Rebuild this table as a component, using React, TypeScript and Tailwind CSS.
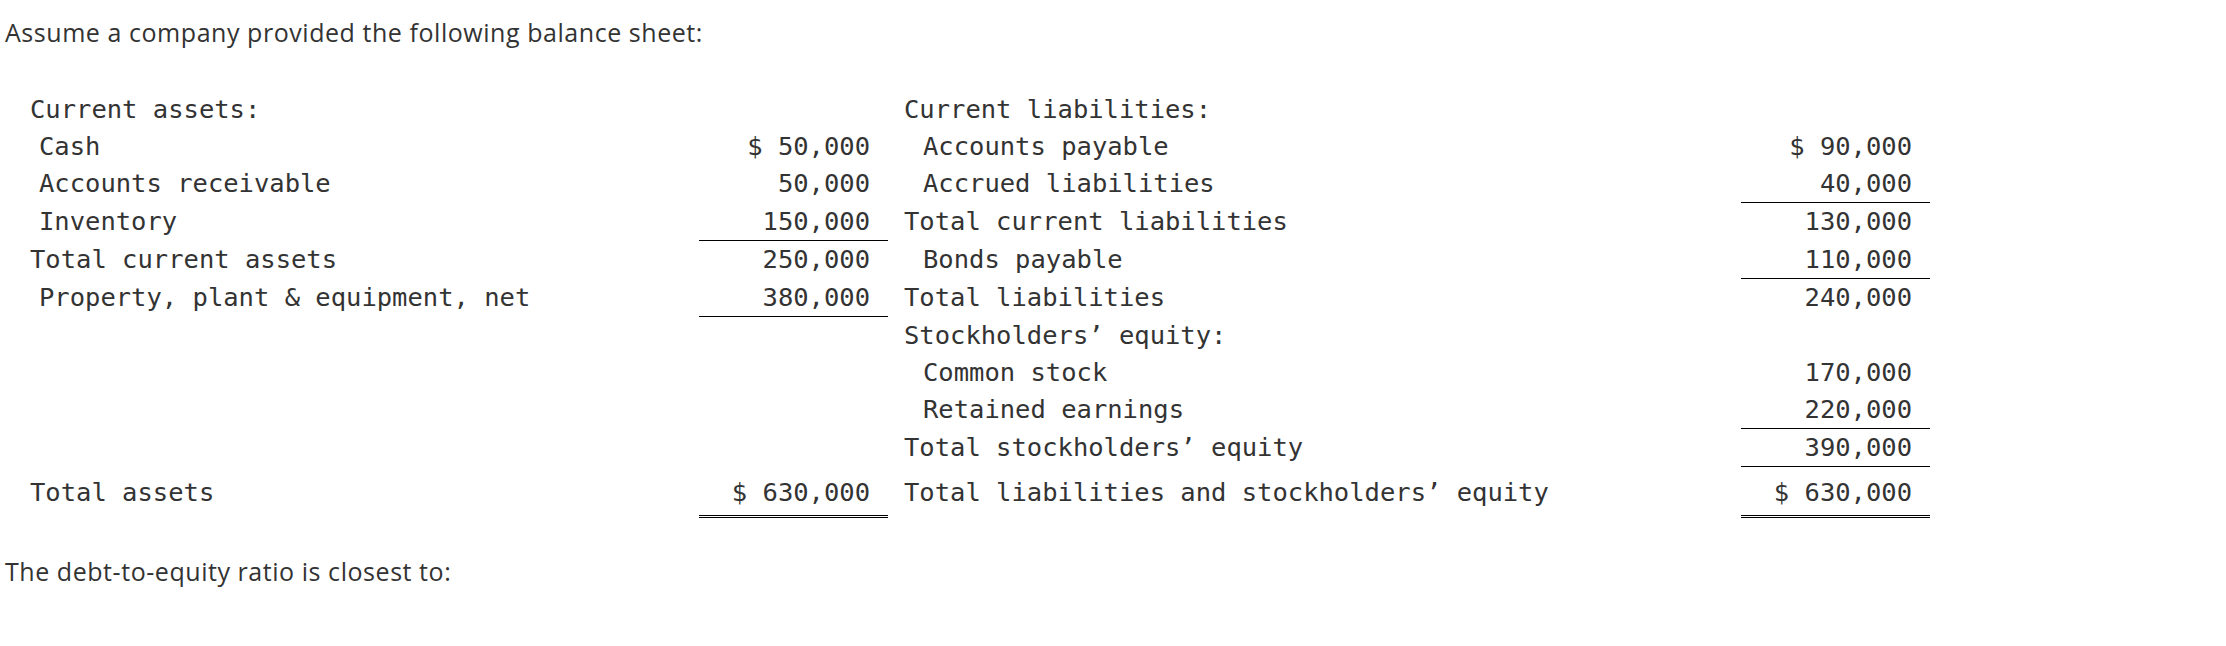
import React from "react";

type Row = {
  l1?: string;
  l1i?: boolean;
  a1?: string;
  a1b?: boolean;
  l2?: string;
  l2i?: boolean;
  a2?: string;
  a2b?: boolean;
};

const rows: Row[] = [
  { l1: "Current assets:", l2: "Current liabilities:" },
  { l1: "Cash", l1i: true, a1: "$ 50,000", l2: "Accounts payable", l2i: true, a2: "$ 90,000" },
  { l1: "Accounts receivable", l1i: true, a1: "50,000", l2: "Accrued liabilities", l2i: true, a2: "40,000", a2b: true },
  { l1: "Inventory", l1i: true, a1: "150,000", a1b: true, l2: "Total current liabilities", a2: "130,000" },
  { l1: "Total current assets", a1: "250,000", l2: "Bonds payable", l2i: true, a2: "110,000", a2b: true },
  { l1: "Property, plant & equipment, net", l1i: true, a1: "380,000", a1b: true, l2: "Total liabilities", a2: "240,000" },
  { l2: "Stockholders’ equity:" },
  { l2: "Common stock", l2i: true, a2: "170,000" },
  { l2: "Retained earnings", l2i: true, a2: "220,000", a2b: true },
  { l2: "Total stockholders’ equity", a2: "390,000", a2b: true },
];

function Label({ text, indent, side }: { text?: string; indent?: boolean; side: "left" | "right" }) {
  let cls = "whitespace-pre leading-[37px] ";
  if (side === "left") cls += indent ? "pl-[34px]" : "pl-[25px]";
  else cls += indent ? "pl-[35px]" : "pl-[16px]";
  return <div className={cls}>{text ?? ""}</div>;
}

function Amount({ text, border }: { text?: string; border?: boolean }) {
  return (
    <div
      className={
        border
          ? "whitespace-pre leading-[37px] text-right pr-[18px] border-b border-black"
          : "whitespace-pre leading-[37px] text-right pr-[18px]"
      }
    >
      {text ?? ""}
    </div>
  );
}

export default function App() {
  return (
    <div className="w-[2226px] h-[646px] bg-white text-[#333] px-[5px] pt-[16px]">
      <p className="font-['Open_Sans',sans-serif] text-[25px] tracking-[0.55px] leading-[32px] text-[#333]">
        Assume a company provided the following balance sheet:
      </p>

      <div className="mt-[43px] grid grid-cols-[694px_189px_853px_189px] font-['DejaVu_Sans_Mono',monospace] text-[25.5px] text-[#333]">
        {rows.map((r, i) => (
          <React.Fragment key={i}>
            <Label text={r.l1} indent={r.l1i} side="left" />
            <Amount text={r.a1} border={r.a1b} />
            <Label text={r.l2} indent={r.l2i} side="right" />
            <Amount text={r.a2} border={r.a2b} />
          </React.Fragment>
        ))}
        <div className="whitespace-pre leading-[37px] pt-[7px] pl-[25px]">Total assets</div>
        <div className="whitespace-pre leading-[37px] pt-[7px] pb-[4px] text-right pr-[18px] border-b-[3px] border-double border-black">
          $ 630,000
        </div>
        <div className="whitespace-pre leading-[37px] pt-[7px] pl-[16px]">
          Total liabilities and stockholders’ equity
        </div>
        <div className="whitespace-pre leading-[37px] pt-[7px] pb-[4px] text-right pr-[18px] border-b-[3px] border-double border-black">
          $ 630,000
        </div>
      </div>

      <p className="mt-[37px] font-['Open_Sans',sans-serif] text-[25px] tracking-[0.55px] leading-[32px] text-[#333]">
        The debt-to-equity ratio is closest to:
      </p>
    </div>
  );
}
